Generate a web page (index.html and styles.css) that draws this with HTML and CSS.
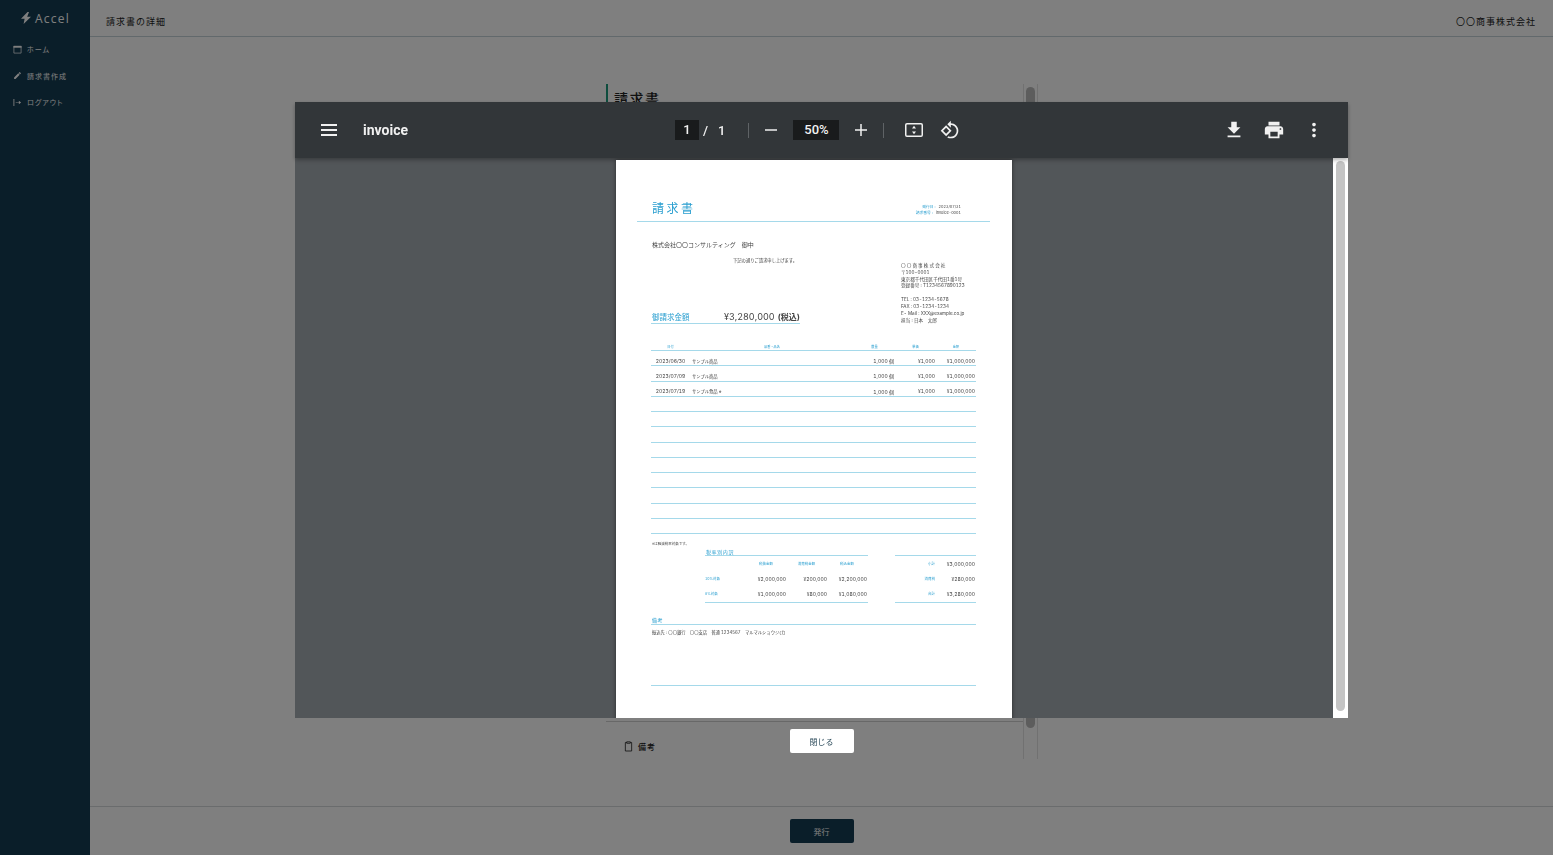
FILE: index.html
```html
<!DOCTYPE html>
<html lang="ja">
<head>
  <meta charset="UTF-8">
  <meta name="viewport" content="width=device-width, initial-scale=1.0">
  <title>請求書の詳細</title>
  <link rel="stylesheet" href="styles.css">
</head>
<body>
  <div class="app">
    <aside class="sidebar">
      <div class="logo">
        <svg class="logo-icon" viewBox="0 0 10 12"><path d="M6.5 0 0 6.8h3.6L2.6 12 10 4.8H6.2L8 0z"/></svg>
        <span>Accel</span>
      </div>
      <nav class="nav">
        <a class="nav-item">
          <svg class="nav-icon" viewBox="0 0 10 10"><path class="line" d="M1 1.5h8v7.5H1z"/><path d="M.5 1h9v2h-9z"/></svg>
          ホーム
        </a>
        <a class="nav-item">
          <svg class="nav-icon" viewBox="0 0 24 24"><path d="M3 17.25V21h3.75L17.81 9.94l-3.75-3.75L3 17.25zM20.71 7.04c.39-.39.39-1.02 0-1.41l-2.34-2.34c-.39-.39-1.02-.39-1.41 0l-1.83 1.83 3.75 3.75 1.83-1.83z"/></svg>
          請求書作成
        </a>
        <a class="nav-item">
          <svg class="nav-icon" viewBox="0 0 10 10"><path d="M.5 1h1v8h-1zM3 4.6h3.5V3l2.5 2-2.5 2V5.4H3z"/></svg>
          ログアウト
        </a>
      </nav>
    </aside>

    <main class="main">
      <header class="topbar">
        <div>請求書の詳細</div>
        <div>〇〇商事株式会社</div>
      </header>
      <div class="content">
        <div class="doc-frame">
          <div class="doc-body">
            <div class="sheet">
              <h1 class="sheet-title">請求書</h1>
            </div>
            <div class="remark">
              <svg class="remark-icon" viewBox="0 0 10 12"><path d="M3 1.5H1.5v9.5h7V1.5H7M3 .8h4v1.6H3z"/></svg>
              備考
            </div>
          </div>
          <div class="doc-track"><div class="doc-thumb"></div></div>
        </div>
      </div>
      <footer class="footer">
        <button class="btn-issue">発行</button>
      </footer>
    </main>
  </div>

  <div class="overlay">
    <div class="viewer">
      <div class="toolbar">
        <div class="tb-left">
          <svg class="ic-menu" viewBox="0 0 16 12"><path d="M0 0h16v2H0zM0 5h16v2H0zM0 10h16v2H0z"/></svg>
          <span class="tb-title">invoice</span>
        </div>
        <div class="tb-center">
          <span class="tb-box tb-page">1</span>
          <span class="tb-slash">/</span>
          <span class="tb-total">1</span>
          <span class="tb-sep"></span>
          <svg class="ic-zoom" viewBox="0 0 12 12"><path d="M0 5.25h12v1.5H0z"/></svg>
          <span class="tb-box tb-zoom">50%</span>
          <svg class="ic-zoom" viewBox="0 0 12 12"><path d="M0 5.25h5.25V0h1.5v5.25H12v1.5H6.75V12h-1.5V6.75H0z"/></svg>
          <span class="tb-sep tb-sep-2"></span>
          <svg class="ic-fit" viewBox="0 0 18 14"><path fill-rule="evenodd" d="M2 0h14a2 2 0 0 1 2 2v10a2 2 0 0 1-2 2H2a2 2 0 0 1-2-2V2a2 2 0 0 1 2-2zm0 1.5a.5.5 0 0 0-.5.5v10a.5.5 0 0 0 .5.5h14a.5.5 0 0 0 .5-.5V2a.5.5 0 0 0-.5-.5z"/><path d="M9 2.8 11 5.6H7zM9 11.2 7 8.4h4z"/></svg>
          <svg class="ic-rotate" viewBox="0 0 24 24"><path d="M7.34 6.41L.86 12.9l6.49 6.48 6.49-6.48-6.5-6.49zM3.69 12.9l3.66-3.66L11 12.9l-3.66 3.66-3.65-3.66zm15.67-6.26C17.61 4.88 15.3 4 13 4V.76L8.76 5 13 9.24V6c1.79 0 3.58.68 4.95 2.05 2.73 2.73 2.73 7.17 0 9.9C16.58 19.32 14.79 20 13 20c-.97 0-1.94-.21-2.84-.61l-1.49 1.49C10.02 21.62 11.51 22 13 22c2.3 0 4.61-.88 6.36-2.64 3.52-3.51 3.52-9.21 0-12.72z"/></svg>
        </div>
        <div class="tb-right">
          <svg class="ic-tool" viewBox="0 0 24 24"><path d="M19 9h-4V3H9v6H5l7 7 7-7zM5 18v2h14v-2H5z"/></svg>
          <svg class="ic-tool" viewBox="0 0 24 24"><path d="M19 8H5c-1.66 0-3 1.34-3 3v6h4v4h12v-4h4v-6c0-1.66-1.34-3-3-3zm-3 11H8v-5h8v5zm3-7c-.55 0-1-.45-1-1s.45-1 1-1 1 .45 1 1-.45 1-1 1zm-1-9H6v4h12V3z"/></svg>
          <svg class="ic-tool" viewBox="0 0 24 24"><path d="M12 8c1.1 0 2-.9 2-2s-.9-2-2-2-2 .9-2 2 .9 2 2 2zm0 2c-1.1 0-2 .9-2 2s.9 2 2 2 2-.9 2-2-.9-2-2-2zm0 6c-1.1 0-2 .9-2 2s.9 2 2 2 2-.9 2-2-.9-2-2-2z"/></svg>
        </div>
      </div>

      <div class="viewer-body">
        <div class="viewer-pane">
          <div class="page">
            <div class="inv-head">
              <div class="inv-title">請求書</div>
              <div class="inv-meta">
                <div><span class="accent">発行日 :</span>2023/07/31</div>
                <div><span class="accent">請求番号 :</span>invoice-0001</div>
              </div>
            </div>

            <div class="inv-body">
              <div class="inv-client">株式会社〇〇コンサルティング　御中</div>
              <div class="inv-lead">下記の通りご請求申し上げます。</div>

              <div class="inv-summary">
                <div class="inv-amount">
                  <span class="inv-amount-label">御請求金額</span>
                  <span class="inv-amount-value">¥3,280,000</span>
                  <b class="inv-amount-tax">(税込)</b>
                </div>
                <div class="inv-sender">
                  <div class="inv-sender-name">〇〇商事株式会社</div>
                  <div>〒100-0001</div>
                  <div>東京都千代田区千代田1番1号</div>
                  <div>登録番号 : T1234567890123</div>
                  <div class="inv-sender-gap">TEL : 03-1234-5678</div>
                  <div>FAX : 03-1234-1234</div>
                  <div>E- Mail : XXX@example.co.jp</div>
                  <div>担当 : 日本　太郎</div>
                </div>
              </div>

              <div class="inv-table">
                <div class="inv-row inv-row-head">
                  <div>日付</div><div>品番・品名</div><div>数量</div><div>単価</div><div>金額</div>
                </div>
                <div class="inv-row">
                  <div class="cell-date">2023/06/30</div><div class="cell-name">サンプル商品</div><div class="cell-num">1,000 個</div><div class="cell-num">¥1,000</div><div class="cell-num">¥1,000,000</div>
                </div>
                <div class="inv-row">
                  <div class="cell-date">2023/07/09</div><div class="cell-name">サンプル商品</div><div class="cell-num">1,000 個</div><div class="cell-num">¥1,000</div><div class="cell-num">¥1,000,000</div>
                </div>
                <div class="inv-row">
                  <div class="cell-date">2023/07/19</div><div class="cell-name">サンプル食品 ※</div><div class="cell-num">1,000 個</div><div class="cell-num">¥1,000</div><div class="cell-num">¥1,000,000</div>
                </div>
                <div class="inv-row"></div>
                <div class="inv-row"></div>
                <div class="inv-row"></div>
                <div class="inv-row"></div>
                <div class="inv-row"></div>
                <div class="inv-row"></div>
                <div class="inv-row"></div>
                <div class="inv-row"></div>
                <div class="inv-row"></div>
              </div>

              <div class="inv-note">※は軽減税率対象です。</div>

              <div class="inv-totals">
                <div class="tax-box">
                  <div class="tax-title">税率別内訳</div>
                  <div class="tax-row tax-row-head"><div></div><div>税抜金額</div><div>消費税金額</div><div>税込金額</div></div>
                  <div class="tax-row"><div class="accent tax-label">10%対象</div><div>¥2,000,000</div><div>¥200,000</div><div>¥2,200,000</div></div>
                  <div class="tax-row"><div class="accent tax-label">8%対象</div><div>¥1,000,000</div><div>¥80,000</div><div>¥1,080,000</div></div>
                </div>
                <div class="sum-box">
                  <div class="sum-row"><span class="accent tax-label">小計</span><span>¥3,000,000</span></div>
                  <div class="sum-row"><span class="accent tax-label">消費税</span><span>¥280,000</span></div>
                  <div class="sum-row"><span class="accent tax-label">合計</span><span>¥3,280,000</span></div>
                </div>
              </div>

              <div class="inv-remark-title">備考</div>
              <div class="inv-remark">振込先 : 〇〇銀行　〇〇支店　普通 1234567　マルマルショウジ(カ</div>
            </div>
          </div>
        </div>
        <div class="viewer-scroll"><div class="viewer-thumb"></div></div>
      </div>
    </div>
    <button class="btn-close">閉じる</button>
  </div>
</body>
</html>
```

FILE: styles.css
```css
* {
  margin: 0;
  padding: 0;
  box-sizing: border-box;
}

body {
  height: 100vh;
  overflow: hidden;
  background-color: #fff;
  color: #222;
  font-family: "Noto Sans CJK JP", "Noto Sans", sans-serif;
}

.app {
  display: flex;
  height: 100%;
}

/* サイドバー */
.sidebar {
  width: 90px;
  flex: none;
  background-color: #143c52;
  color: #fff;
}

.logo {
  display: flex;
  align-items: center;
  justify-content: center;
  gap: 4px;
  height: 36px;
  padding-left: 1px;
  font-family: "Open Sans", sans-serif;
  font-size: 12px;
  font-weight: 400;
  letter-spacing: 1.2px;
}

.logo-icon {
  width: 10px;
  height: 12px;
  fill: #fff;
}

.nav-item {
  display: flex;
  align-items: center;
  gap: 5px;
  height: 26.5px;
  padding-left: 13px;
  font-size: 7px;
  letter-spacing: 1px;
  font-feature-settings: "palt" 1;
}

.nav-icon {
  width: 9px;
  height: 9px;
  fill: #fff;
}

.nav-icon .line {
  fill: none;
  stroke: #fff;
  stroke-width: .8;
}

/* メイン */
.main {
  flex: 1;
  display: flex;
  flex-direction: column;
  min-width: 0;
}

.topbar {
  display: flex;
  justify-content: space-between;
  align-items: center;
  height: 37px;
  flex: none;
  padding: 7px 17px 0 16px;
  border-bottom: 1px solid #c4d2d8;
  font-size: 9px;
  letter-spacing: 1px;
}

.content {
  flex: 1;
  padding-top: 47px;
}

.doc-frame {
  display: flex;
  width: 431px;
  height: 675px;
  margin: 0 auto;
}

.doc-body {
  flex: 1;
}

.sheet {
  height: 638px;
  border-bottom: 1px solid #d0d0d0;
}

.sheet-title {
  height: 100px;
  padding: 4px 0 0 6px;
  border-left: 2px solid #1d9a7c;
  font-size: 14px;
  font-weight: 500;
  letter-spacing: 1.5px;
}

.remark {
  display: flex;
  align-items: center;
  gap: 5px;
  padding: 19px 0 0 18px;
  font-size: 8px;
  letter-spacing: 1px;
  font-weight: 500;
}

.remark-icon {
  width: 9px;
  height: 11px;
  fill: none;
  stroke: #222;
  stroke-width: .9;
}

.doc-track {
  width: 15px;
  margin-right: -1px;
  border-left: 1px solid #e2e2e2;
  border-right: 1px solid #e2e2e2;
  padding: 3px 2px 0 2px;
}

.doc-thumb {
  height: 641px;
  border-radius: 5px;
  background-color: #bbb;
}

.footer {
  flex: none;
  display: flex;
  justify-content: center;
  height: 49px;
  padding-top: 12px;
  border-top: 1px solid #d4d8da;
}

.btn-issue,
.btn-close {
  width: 64px;
  height: 24px;
  border: none;
  border-radius: 2px;
  font-family: inherit;
  font-size: 8px;
}

.btn-issue {
  background-color: #143c52;
  color: #fff;
}

/* モーダル */
.overlay {
  position: fixed;
  inset: 0;
  display: flex;
  flex-direction: column;
  align-items: center;
  padding: 102px 0 0 90px;
  background-color: rgba(0, 0, 0, .5);
}

.btn-close {
  flex: none;
  margin-top: 11px;
  background-color: #fff;
  color: #2b4a5a;
}

.viewer {
  display: flex;
  flex-direction: column;
  flex: none;
  width: 1053px;
  height: 616px;
  background-color: #525659;
}

.toolbar {
  position: relative;
  display: flex;
  align-items: center;
  flex: none;
  height: 56px;
  background-color: #323639;
  box-shadow: 0 2px 4px rgba(0, 0, 0, .3);
  color: #f1f1f1;
  font-family: Roboto, sans-serif;
  fill: #f1f1f1;
}

.tb-left {
  display: flex;
  align-items: center;
  flex: none;
  width: 380px;
  padding-left: 26px;
}

.ic-menu {
  width: 16px;
  height: 12px;
}

.tb-title {
  margin-left: 26px;
  font-size: 14px;
  font-weight: 700;
}

.tb-center {
  display: flex;
  align-items: center;
  font-size: 13px;
  font-weight: 500;
}

.tb-box {
  height: 20px;
  line-height: 20px;
  text-align: center;
  background-color: #191b1c;
}

.tb-page {
  width: 24px;
}

.tb-slash {
  margin-left: 4px;
}

.tb-total {
  margin-left: 10px;
}

.tb-sep {
  width: 1px;
  height: 15px;
  margin: 0 16px 0 23px;
  background-color: #5f6366;
}

.tb-sep-2 {
  margin: 0 21px 0 16px;
}

.tb-zoom {
  width: 46px;
  margin: 0 16px;
}

.ic-zoom {
  width: 12px;
  height: 12px;
}

.ic-fit {
  width: 18px;
  height: 14px;
}

.ic-rotate {
  width: 20px;
  height: 20px;
  margin-left: 17px;
}

.tb-right {
  display: flex;
  align-items: center;
  gap: 18px;
  margin-left: 263px;
}

.ic-tool {
  width: 22px;
  height: 22px;
}

.viewer-body {
  display: flex;
  flex: 1;
  min-height: 0;
}

.viewer-pane {
  flex: 1;
  overflow: hidden;
  padding-top: 2px;
}

.viewer-scroll {
  width: 15px;
  flex: none;
  padding: 3px 3px;
  background-color: #fff;
}

.viewer-thumb {
  height: 550px;
  border-radius: 5px;
  background-color: #c4c4c4;
}

/* 請求書PDF */
.page {
  width: 396px;
  height: 560px;
  margin: 0 auto;
  background-color: #fff;
  box-shadow: 0 0 4px rgba(0, 0, 0, .5);
  color: #444;
  font-family: Inter, "Noto Sans CJK JP", sans-serif;
  font-size: 5px;
  font-variant-numeric: tabular-nums;
  filter: blur(.3px);
}

.accent {
  color: #2a9fd0;
}

.inv-head {
  display: flex;
  justify-content: space-between;
  align-items: flex-end;
  width: 353px;
  height: 62px;
  margin-left: 21px;
  padding: 0 29px 5px 15px;
  border-bottom: 1px solid #a5d9ea;
}

.inv-title {
  font-size: 12px;
  line-height: 14px;
  letter-spacing: 2.5px;
  color: #2a9fd0;
}

.inv-meta {
  font-size: 3.8px;
  line-height: 6px;
  text-align: right;
}

.inv-meta .accent {
  margin-right: 3px;
}

.inv-body {
  width: 325px;
  margin-left: 35px;
}

.inv-client {
  margin-top: 18px;
  padding-left: 1px;
  font-size: 6px;
  line-height: 10px;
}

.inv-lead {
  margin-top: 8px;
  padding-left: 82px;
  font-size: 4.3px;
  line-height: 6px;
}

.inv-summary {
  display: flex;
  justify-content: space-between;
  height: 77px;
}

.inv-amount {
  display: flex;
  align-items: baseline;
  width: 149px;
  height: 15px;
  margin-top: 45px;
  padding: 2px 0 0 1px;
  border-bottom: 1px solid #a5d9ea;
  line-height: 12px;
}

.inv-amount-label {
  width: 72px;
  font-size: 7.5px;
  color: #2a9fd0;
}

.inv-amount-value {
  font-size: 9px;
}

.inv-amount-tax {
  margin-left: 3px;
  font-size: 8px;
}

.inv-sender {
  width: 75px;
  margin-top: -1px;
  font-size: 4.6px;
  line-height: 6.8px;
}

.inv-sender-name {
  letter-spacing: 1.1px;
}

.inv-sender-gap {
  margin-top: 7px;
}

.inv-table {
  margin-top: 3px;
}

.inv-row {
  display: grid;
  grid-template-columns: 39px 164px 41px 41px 40px;
  align-items: center;
  height: 15.25px;
  padding-top: 5px;
  border-bottom: 1px solid #a5d9ea;
  font-size: 5px;
}

.inv-row-head {
  height: 7px;
  padding-top: 0;
  font-size: 3.2px;
  line-height: 6px;
  text-align: center;
  color: #2a9fd0;
}

.cell-date {
  text-align: center;
}

.cell-name {
  padding-left: 2px;
  font-size: 4.3px;
}

.cell-num {
  padding-right: 1px;
  text-align: right;
}

.inv-note {
  margin-top: 8px;
  padding-left: 1px;
  font-size: 3.5px;
  line-height: 5px;
}

.inv-totals {
  display: flex;
  justify-content: space-between;
  padding-left: 54px;
}

.tax-box {
  width: 163px;
  border-bottom: 1px solid #a5d9ea;
}

.tax-title {
  height: 9px;
  padding-left: 1px;
  font-size: 5px;
  line-height: 10px;
  letter-spacing: .6px;
  color: #2a9fd0;
  border-bottom: 1px solid #a5d9ea;
}

.tax-row {
  display: grid;
  grid-template-columns: 41px 40px 41px 40px;
  align-items: center;
  height: 15.2px;
  font-size: 5px;
  text-align: right;
}

.tax-row-head {
  font-size: 3.5px;
  text-align: center;
  color: #2a9fd0;
}

.tax-label {
  font-size: 3.5px;
  text-align: left;
}

.sum-box {
  width: 81px;
  padding-top: 8px;
  border-bottom: 1px solid #a5d9ea;
}

.sum-box::before {
  content: "";
  display: block;
  border-top: 1px solid #a5d9ea;
}

.sum-row {
  display: grid;
  grid-template-columns: 40px 40px;
  align-items: center;
  height: 15.2px;
  font-size: 5px;
  text-align: right;
}

.sum-row .tax-label {
  text-align: right;
}

.inv-remark-title {
  margin-top: 13px;
  height: 9px;
  padding-left: 1px;
  border-bottom: 1px solid #a5d9ea;
  font-size: 5px;
  line-height: 8px;
  letter-spacing: .6px;
  color: #2a9fd0;
}

.inv-remark {
  height: 61px;
  padding: 5px 0 0 1px;
  border-bottom: 1px solid #a5d9ea;
  font-size: 4.3px;
  line-height: 6px;
}
```
